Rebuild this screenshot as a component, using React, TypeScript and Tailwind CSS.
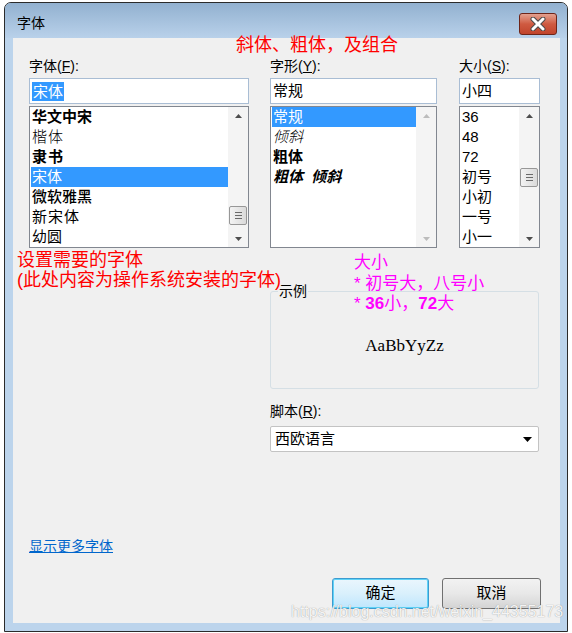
import React from 'react';

type Item = { text: React.ReactNode; cls?: string };

function Arrow({ up, disabled }: { up?: boolean; disabled?: boolean }) {
  return (
    <svg width="7" height="4" viewBox="0 0 7 4" className="block">
      <polygon
        points={up ? '0,4 7,4 3.5,0' : '0,0 7,0 3.5,4'}
        fill={disabled ? '#bcbcbc' : '#4d4d4d'}
      />
    </svg>
  );
}

function Scrollbar({ thumbAt, disabled }: { thumbAt?: number; disabled?: boolean }) {
  return (
    <div className="w-[20px] h-full bg-[#f4f4f4] flex flex-col">
      <div className="h-[17px] flex items-center justify-center">
        <Arrow up disabled={disabled} />
      </div>
      <div className="flex-1 flex flex-col px-[1px]">
        {thumbAt !== undefined && (
          <>
            <div style={{ height: thumbAt }} />
            <div className="h-[19px] border border-[#979797] rounded-[2px] bg-gradient-to-r from-[#f3f3f3] to-[#dadada] flex flex-col items-center justify-center gap-[2px]">
              <div className="w-[7px] h-px bg-[#6a6a6a]" />
              <div className="w-[7px] h-px bg-[#6a6a6a]" />
              <div className="w-[7px] h-px bg-[#6a6a6a]" />
            </div>
          </>
        )}
      </div>
      <div className="h-[17px] flex items-center justify-center">
        <Arrow disabled={disabled} />
      </div>
    </div>
  );
}

function ListBox({
  items,
  selected,
  thumbAt,
  disabled,
}: {
  items: Item[];
  selected: number;
  thumbAt?: number;
  disabled?: boolean;
}) {
  return (
    <div className="mt-[2px] h-[142px] border border-[#828790] bg-white flex pl-[1px]">
      <div className="flex-1 flex flex-col">
        {items.map((it, i) => (
          <div
            key={i}
            className={
              'h-[20px] leading-[20px] text-[15px] pl-[1px] whitespace-nowrap ' +
              (i === selected ? 'bg-[#3399ff] text-white ' : 'text-black ') +
              (it.cls ?? '')
            }
          >
            {it.text}
          </div>
        ))}
      </div>
      <Scrollbar thumbAt={thumbAt} disabled={disabled} />
    </div>
  );
}

function TextBox({ children }: { children: React.ReactNode }) {
  return (
    <div className="h-[26px] border border-[#a9bdd4] bg-white flex items-center pl-[2px] text-[15px]">
      {children}
    </div>
  );
}

function Label({ children }: { children: React.ReactNode }) {
  return <div className="h-[16px] leading-[16px] text-[14px] text-black mb-[4px]">{children}</div>;
}

export default function App() {
  const fonts: Item[] = [
    { text: '华文中宋', cls: 'font-semibold' },
    { text: '楷体', cls: 'font-light text-[14px] tracking-[1px]' },
    { text: '隶书', cls: 'font-bold text-[14px] tracking-[1px]' },
    { text: '宋体' },
    { text: '微软雅黑', cls: 'font-medium' },
    { text: '新宋体', cls: 'tracking-[1px]' },
    { text: '幼圆' },
  ];
  const styles: Item[] = [
    { text: '常规' },
    { text: '倾斜', cls: 'italic font-light' },
    { text: '粗体', cls: 'font-bold' },
    { text: '粗体  倾斜', cls: 'font-bold italic whitespace-pre' },
  ];
  const sizes: Item[] = ['36', '48', '72', '初号', '小初', '一号', '小一'].map((t) => ({ text: t }));

  return (
    <div className="relative w-[572px] h-[633px] bg-white overflow-hidden font-['Liberation_Sans','Noto_Sans_CJK_SC',sans-serif] text-black">
      <div className="ml-[4px] mt-[2px] w-[564px] h-[630px] border border-[#2b2b2b] rounded-t-[7px] bg-[#bcd4ec] flex flex-col overflow-hidden">
        {/* title bar */}
        <div className="h-[35px] shrink-0 bg-gradient-to-b from-[#92b1d0] to-[#b9d1ea] flex justify-between">
          <div className="pl-[12px] pt-[12px] text-[14px] leading-[16px]">字体</div>
          <div className="mt-[10px] mr-[10px] w-[38px] h-[22px] rounded-[3px] border border-[#6e2519] bg-gradient-to-b from-[#e3a08f] via-[#cf5a41] to-[#c0442c] flex items-center justify-center">
            <svg width="16" height="14" viewBox="0 0 16 14">
              <path d="M3 2 L13 12 M13 2 L3 12" stroke="#4a4a4a" strokeWidth="5" strokeLinecap="round" />
              <path d="M3 2 L13 12 M13 2 L3 12" stroke="#ffffff" strokeWidth="3" strokeLinecap="round" />
            </svg>
          </div>
        </div>

        {/* body */}
        <div className="relative ml-[8px] mr-[7px] h-[585px] bg-[#f0f0f0] flex flex-col pl-[16px] pr-[20px] pt-[20px]">
          <div className="flex">
            <div className="w-[220px]">
              <Label>
                字体(<u>F</u>):
              </Label>
              <TextBox>
                <span className="bg-[#3399ff] text-white leading-[19px] px-[1px]">宋体</span>
              </TextBox>
              <ListBox items={fonts} selected={3} thumbAt={82} />
            </div>
            <div className="w-[167px] ml-[21px]">
              <Label>
                字形(<u>Y</u>):
              </Label>
              <TextBox>常规</TextBox>
              <ListBox items={styles} selected={0} disabled />
            </div>
            <div className="w-[81px] ml-[22px]">
              <Label>
                大小(<u>S</u>):
              </Label>
              <TextBox>小四</TextBox>
              <ListBox items={sizes} selected={-1} thumbAt={44} />
            </div>
          </div>

          <div className="ml-[241px] w-[269px]">
            <fieldset className="mt-[35px] h-[106px] border border-[#d5dfe5] rounded-[3px]">
              <legend className="ml-[7px] px-[1px] text-[14px] leading-[16px]">示例</legend>
              <div className="pt-[37px] text-center text-[17px] leading-[20px] font-['Liberation_Serif',serif]">
                AaBbYyZz
              </div>
            </fieldset>
            <div className="mt-[14px] h-[16px] leading-[16px] text-[14px]">
              脚本(<u>R</u>):
            </div>
            <div className="mt-[7px] h-[26px] border border-[#c3c3c3] rounded-[2px] bg-white flex items-center justify-between pl-[4px] pr-[6px] text-[15px]">
              <span>西欧语言</span>
              <svg width="9" height="5" viewBox="0 0 9 5">
                <polygon points="0,0 9,0 4.5,5" fill="#000" />
              </svg>
            </div>
          </div>

          <a className="mt-[86px] self-start h-[16px] leading-[16px] text-[14px] text-[#0066cc] underline cursor-pointer">
            显示更多字体
          </a>

          <div className="mt-[24px] -mr-[1px] flex justify-end gap-[13px]">
            <button className="w-[97px] h-[31px] rounded-[3px] border border-[#3c9bd0] shadow-[inset_0_0_0_1px_#5fd3f7] bg-gradient-to-b from-[#eaf6fd] via-[#d9f0fc] to-[#bee6fd] text-[15px]">
              确定
            </button>
            <button className="w-[99px] h-[31px] rounded-[3px] border border-[#707070] bg-gradient-to-b from-[#f2f2f2] via-[#e8e8e8] to-[#d4d4d4] text-[15px]">
              取消
            </button>
          </div>

          {/* annotations drawn over the dialog */}
          <div className="absolute left-[223px] top-[-3px] text-[18px] leading-[20px] text-[#ff0000]">
            斜体、粗体，及组合
          </div>
          <div className="absolute left-[4px] top-[212px] text-[18px] leading-[20px] text-[#ff0000] whitespace-nowrap">
            <div>设置需要的字体</div>
            <div>(此处内容为操作系统安装的字体)</div>
          </div>
          <div className="absolute left-[341px] top-[215px] text-[17px] leading-[20.5px] text-[#ff00ff] whitespace-pre">
            <div>大小</div>
            <div>* 初号大，八号小</div>
            <div>
              * <b>36</b>小，<b>72</b>大
            </div>
          </div>
        </div>
      </div>

      <div className="absolute left-[291px] top-[604px] text-[16px] leading-[16px] text-white/90 whitespace-nowrap font-['Liberation_Sans',sans-serif] [text-shadow:0_0_1px_rgba(0,0,0,0.45)]">
        https://blog.csdn.net/weixin_44355173
      </div>
    </div>
  );
}
